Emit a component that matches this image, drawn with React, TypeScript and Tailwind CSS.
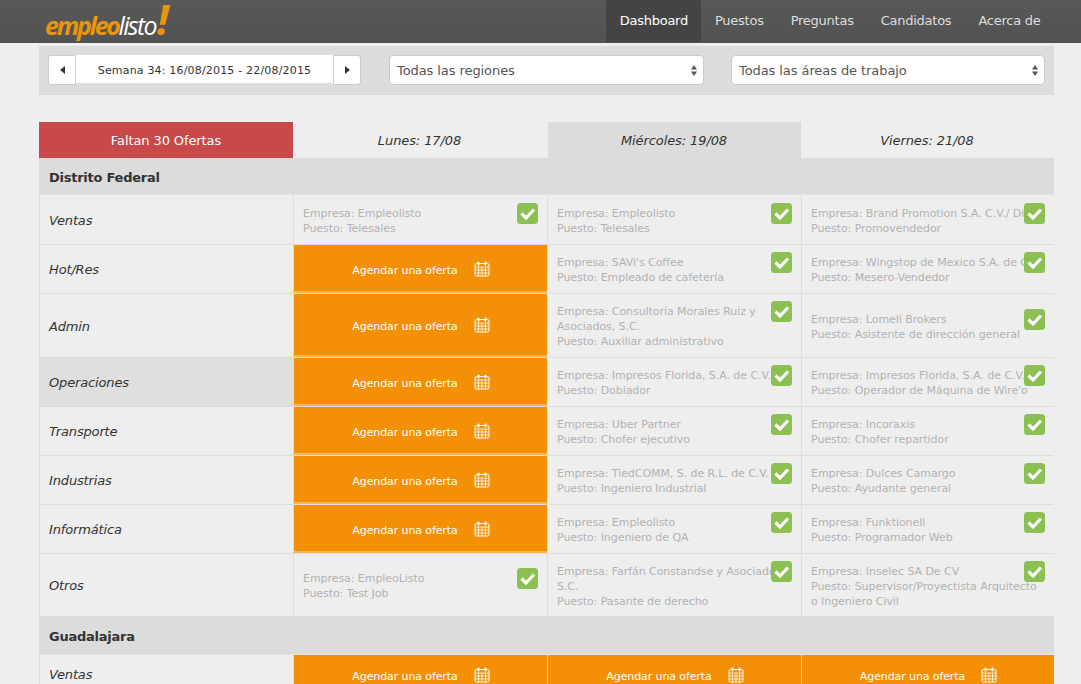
interface Offer {
  company: string[]
  job: string[]
}

type Cell = Offer | null

interface Row {
  name: string
  height: string
  hover?: boolean
  compact?: boolean
  cells: [Cell, Cell, Cell]
}

const offer = (company: string | string[], job: string | string[]): Offer => ({
  company: Array.isArray(company) ? company : [company],
  job: Array.isArray(job) ? job : [job],
})

const federal: Row[] = [
  {
    name: 'Ventas',
    height: 'h-[50px]',
    cells: [
      offer('Empleolisto', 'Telesales'),
      offer('Empleolisto', 'Telesales'),
      offer('Brand Promotion S.A. C.V./ Dist', 'Promovendedor'),
    ],
  },
  {
    name: 'Hot/Res',
    height: 'h-[49px]',
    cells: [
      null,
      offer("SAVi's Coffee", 'Empleado de cafetería'),
      offer('Wingstop de Mexico S.A. de C.V.', 'Mesero-Vendedor'),
    ],
  },
  {
    name: 'Admin',
    height: 'h-[64px]',
    cells: [
      null,
      offer(['Consultoría Morales Ruiz y', 'Asociados, S.C.'], 'Auxiliar administrativo'),
      offer('Lomelí Brokers', 'Asistente de dirección general'),
    ],
  },
  {
    name: 'Operaciones',
    height: 'h-[49px]',
    hover: true,
    cells: [
      null,
      offer('Impresos Florida, S.A. de C.V.', 'Doblador'),
      offer('Impresos Florida, S.A. de C.V.', "Operador de Máquina de Wire'o"),
    ],
  },
  {
    name: 'Transporte',
    height: 'h-[49px]',
    cells: [null, offer('Uber Partner', 'Chofer ejecutivo'), offer('Incoraxis', 'Chofer repartidor')],
  },
  {
    name: 'Industrias',
    height: 'h-[49px]',
    cells: [
      null,
      offer('TiedCOMM, S. de R.L. de C.V.', 'Ingeniero Industrial'),
      offer('Dulces Camargo', 'Ayudante general'),
    ],
  },
  {
    name: 'Informática',
    height: 'h-[49px]',
    cells: [
      null,
      offer('Empleolisto', 'Ingeniero de QA'),
      offer('Funktionell', 'Programador Web'),
    ],
  },
  {
    name: 'Otros',
    height: 'h-[63px]',
    cells: [
      offer('EmpleoListo', 'Test Job'),
      offer(['Farfán Constandse y Asociados,', 'S.C.'], 'Pasante de derecho'),
      offer('Inselec SA De CV', ['Supervisor/Proyectista Arquitecto', 'o Ingeniero Civil']),
    ],
  },
]

const gridCols = 'grid grid-cols-[254px_254px_254px_253px]'

function CalendarIcon() {
  return (
    <svg width="16" height="16" viewBox="0 0 16 16" fill="none" stroke="#fff" strokeWidth="1">
      <rect x="1" y="2.5" width="14" height="12.5" rx="1.5" />
      <path d="M1 6h14M1 9h14M1 12h14M4.5 6v9M8 6v9M11.5 6v9" strokeWidth="0.8" />
      <rect x="3.5" y="0.5" width="2" height="4" rx="1" fill="#fff" stroke="none" />
      <rect x="10.5" y="0.5" width="2" height="4" rx="1" fill="#fff" stroke="none" />
    </svg>
  )
}

// sits over the text on purpose, long company names run under it
function CheckIcon() {
  return (
    <svg width="21" height="21" viewBox="0 0 21 21" className="absolute right-[9px] top-[-3px] opacity-90">
      <rect width="21" height="21" rx="3.5" fill="#82bc42" />
      <path d="M4.5 10.5 9 15l8-8.5" fill="none" stroke="#fff" strokeWidth="3.2" />
    </svg>
  )
}

function SortArrows() {
  return (
    <svg width="6" height="11" viewBox="0 0 6 11" className="shrink-0" fill="#555">
      <path d="M3 0 6 4.5H0z" />
      <path d="M3 11 6 6.5H0z" />
    </svg>
  )
}

function Select({ label, width }: { label: string; width: string }) {
  return (
    <div className={`flex h-[30px] items-center justify-between rounded-[4px] border border-[#ccc] bg-white pl-[7px] pr-[6px] text-[13px] tracking-[-0.08px] text-[#555] ${width}`}>
      <span className="pt-[2px]">{label}</span>
      <SortArrows />
    </div>
  )
}

function ScheduleCell() {
  return (
    <div className="flex items-center justify-center border-b-2 border-l border-[#f6b558] border-l-[#ddd] bg-[#f39005] pl-[1px] pt-[6px] text-[11px] tracking-[-0.1px] text-white">
      <span>Agendar una oferta</span>
      <span className="mb-[5px] ml-[16px]">
        <CalendarIcon />
      </span>
    </div>
  )
}

function OfferCell({ data }: { data: Offer }) {
  return (
    <div className="flex items-center overflow-hidden border-l border-[#ddd] pl-[9px] pt-[2px] text-[11px] leading-[15px] tracking-[-0.06px] text-[#b2b2b2]">
      <div className="relative w-full">
        <div className="w-[232px] overflow-hidden whitespace-nowrap">
          {data.company.map((line, i) => (
            <div key={line}>{i === 0 ? `Empresa: ${line}` : line}</div>
          ))}
          {data.job.map((line, i) => (
            <div key={line}>{i === 0 ? `Puesto: ${line}` : line}</div>
          ))}
        </div>
        <CheckIcon />
      </div>
    </div>
  )
}

function RegionHeader({ name, height }: { name: string; height: string }) {
  return (
    <div className={`flex items-center border-b border-[#e4e4e4] bg-[#dcdcdc] pl-[10px] pt-[3px] text-[13px] font-bold tracking-[-0.25px] text-[#333] ${height}`}>
      {name}
    </div>
  )
}

function TableRow({ row }: { row: Row }) {
  return (
    <div className={`${gridCols} border-b border-[#ddd] ${row.height}`}>
      <div
        className={`flex items-center border-l border-[#ddd] pl-[9px] text-[13px] italic tracking-[-0.15px] text-[#333] ${
          row.compact ? 'pb-[2px]' : 'pt-[2px]'
        } ${row.hover ? 'bg-[#dfdfdf]' : ''}`}
      >
        {row.name}
      </div>
      {row.cells.map((cell, i) =>
        cell ? <OfferCell key={i} data={cell} /> : <ScheduleCell key={i} />
      )}
    </div>
  )
}

export default function App() {
  return (
    <div className="h-screen overflow-hidden bg-[#eeeeee] font-['DejaVu_Sans','Liberation_Sans',sans-serif]">
      <header className="flex h-[43px] items-start justify-between bg-gradient-to-b from-[#585858] to-[#525252] pl-[45px] pr-[27px]">
        <div className="flex h-[42px] items-baseline pt-[3px] font-['Open_Sans',sans-serif] text-[25px] font-bold italic leading-[32px]">
          <span className="tracking-[-2.3px] text-[#e8960c]">empleo</span>
          <span className="font-normal tracking-[-1.7px] text-white">listo</span>
          <span className="ml-[1px] pr-[4px] text-[42px] leading-[32px] text-[#e8960c]">!</span>
        </div>
        <nav className="flex h-[42px] items-center text-[13px] tracking-[-0.25px] text-[#ddd]">
          <span className="flex h-full items-center bg-[#444] px-[13.5px] text-white">Dashboard</span>
          <span className="px-[13.5px]">Puestos</span>
          <span className="px-[13.5px]">Preguntas</span>
          <span className="px-[13.5px]">Candidatos</span>
          <span className="px-[13.5px]">Acerca de</span>
        </nav>
      </header>

      <main className="mx-[39px] w-[1015px] pt-[3px]">
        <div className="flex h-[49px] items-start gap-[28px] bg-[#dcdcdc] pl-[9px] pt-[9px]">
          <div className="flex w-[313px] items-start text-[#333]">
            <button className="flex h-[30px] w-[28px] items-center justify-center rounded-l-[3px] border border-[#ccc] bg-white">
              <svg width="5" height="8" viewBox="0 0 5 8" fill="#333"><path d="M5 0v8L0 4z" /></svg>
            </button>
            <div className="flex h-[28px] w-[257px] items-center justify-center bg-white pt-[4px] text-[11px] tracking-[0.18px]">
              Semana 34: 16/08/2015 - 22/08/2015
            </div>
            <button className="flex h-[30px] w-[28px] items-center justify-center rounded-r-[3px] border border-[#ccc] bg-white">
              <svg width="5" height="8" viewBox="0 0 5 8" fill="#333"><path d="M0 0v8l5-4z" /></svg>
            </button>
          </div>
          <Select label="Todas las regiones" width="w-[315px]" />
          <div className="-ml-[1px]">
            <Select label="Todas las áreas de trabajo" width="w-[314px]" />
          </div>
        </div>

        <div className={`${gridCols} mt-[27px] h-[36px] text-[13px] italic tracking-[-0.1px] text-[#333]`}>
          <div className="flex items-center justify-center bg-[#c9494a] pt-[2px] not-italic text-white">Faltan 30 Ofertas</div>
          <div className="flex items-center justify-center pr-[1px] pt-[2px]">Lunes: 17/08</div>
          <div className="flex items-center justify-center border-l border-[#eeeeee] bg-[#dcdcdc] pr-[1px] pt-[2px]">Miércoles: 19/08</div>
          <div className="flex items-center justify-center pr-[1px] pt-[2px]">Viernes: 21/08</div>
        </div>

        <RegionHeader name="Distrito Federal" height="h-[37px]" />
        {federal.map((row) => (
          <TableRow key={row.name} row={row} />
        ))}
        <RegionHeader name="Guadalajara" height="h-[38px]" />
        <TableRow row={{ name: 'Ventas', height: 'h-[42px]', compact: true, cells: [null, null, null] }} />
      </main>
    </div>
  )
}
